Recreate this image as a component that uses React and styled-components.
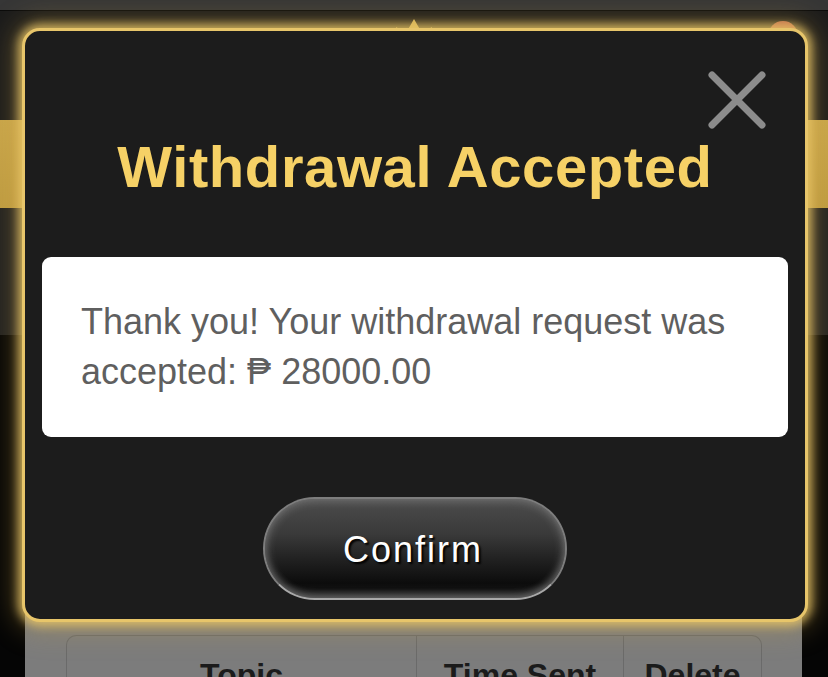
import React from "react";
import styled, { createGlobalStyle } from "styled-components";

const Global = createGlobalStyle`
  html, body { margin: 0; padding: 0; background: #050505; }
  body { font-family: "Liberation Sans", "DejaVu Sans", Arial, sans-serif; }
  * { box-sizing: border-box; }
`;

const Page = styled.div`
  position: relative;
  width: 828px;
  height: 677px;
  overflow: hidden;
  background: #050505;
  display: flex;
  flex-direction: column;
`;

const StatusBar = styled.div`
  height: 11px;
  flex: none;
  background: #363636;
  border-bottom: 1px solid #0b0b0b;
`;

const Header = styled.div`
  height: 109px;
  flex: none;
  background: #1b1b1b;
  display: flex;
  justify-content: space-between;
  align-items: flex-start;
  padding: 6px 30px 0 30px;
`;

const Spacer = styled.div`
  width: 30px;
`;

const Avatar = styled.div`
  width: 30px;
  height: 30px;
  border-radius: 50%;
  background: #c0664f;
  margin-top: 4px;
`;

const GoldBand = styled.div`
  height: 88px;
  flex: none;
  background: linear-gradient(180deg, #c9a64b 0%, #bf9c42 100%);
`;

const DarkStrip = styled.div`
  height: 127px;
  flex: none;
  background: #202020;
`;

const BlackArea = styled.div`
  height: 275px;
  flex: none;
  background: #050505;
`;

const GrayPanel = styled.div`
  flex: 1;
  margin: 0 26px 0 25px;
  background: #7c7c7c;
  padding: 25px 40px 0 41px;
`;

const Table = styled.div`
  display: grid;
  grid-template-columns: 349px 207px 1fr;
  border: 1px solid #6a6a6a;
  border-bottom: none;
  border-radius: 10px 10px 0 0;
  height: 80px;
`;

const HeadCell = styled.div`
  font-weight: 700;
  font-size: 32px;
  line-height: 38px;
  color: #1b1b1b;
  text-align: center;
  padding-top: 20px;
  border-left: ${(p) => (p.$first ? "none" : "1px solid #6a6a6a")};
`;

const Modal = styled.div`
  position: absolute;
  left: 22px;
  top: 28px;
  width: 786px;
  height: 594px;
  border: 3px solid #e7c56a;
  border-radius: 18px;
  background: #1c1c1c;
  box-shadow: 0 0 10px 4px rgba(233, 198, 104, 0.8),
    0 0 28px 8px rgba(205, 165, 70, 0.35);
  display: flex;
  flex-direction: column;
  align-items: center;
  padding: 0 17px;
`;

const CloseButton = styled.button`
  position: absolute;
  top: 39px;
  right: 38px;
  width: 60px;
  height: 60px;
  padding: 0;
  border: none;
  background: transparent;
  cursor: pointer;
  display: block;
`;

const Title = styled.h1`
  margin: 102px 0 0 0;
  height: 67px;
  font-size: 58px;
  line-height: 67px;
  font-weight: 700;
  letter-spacing: 0.6px;
  color: #f6d166;
  text-align: center;
  white-space: nowrap;
`;

const MessageBox = styled.div`
  margin-top: 57px;
  width: 100%;
  height: 180px;
  background: #ffffff;
  border-radius: 9px;
  padding: 40px 39px;
  font-size: 36px;
  line-height: 50px;
  color: #5f5f5f;
`;

const ConfirmButton = styled.button`
  margin-top: 60px;
  width: 304px;
  height: 103px;
  border-radius: 52px;
  border: 2px solid #7d7d7d;
  border-bottom-color: #a8a8a8;
  background: linear-gradient(
    180deg,
    #4c4c4c 0%,
    #3a3a3a 35%,
    #222222 60%,
    #0c0c0c 85%,
    #1a1a1a 100%
  );
  box-shadow: inset 0 0 10px 2px rgba(255, 255, 255, 0.22),
    inset 0 -4px 6px rgba(180, 180, 180, 0.25);
  color: #ffffff;
  font-family: "Liberation Sans", "DejaVu Sans", Arial, sans-serif;
  font-size: 36px;
  letter-spacing: 2px;
  text-shadow: 2px 2px 2px #000;
  display: flex;
  align-items: center;
  justify-content: center;
  padding: 3px 4px 0 0;
  cursor: pointer;
`;

const Crown = () => (
  <svg width="40" height="26" viewBox="0 0 40 26">
    <path
      d="M4 24 L2 10 L12 16 L20 2 L28 16 L38 10 L36 24 Z"
      fill="#d8b75c"
    />
  </svg>
);

const CloseIcon = () => (
  <svg width="60" height="60" viewBox="0 0 60 60">
    <path
      d="M5 5 L55 55 M55 5 L5 55"
      stroke="#8c8c8c"
      strokeWidth="7"
      strokeLinecap="round"
    />
  </svg>
);

export default function App() {
  return (
    <>
      <Global />
      <Page>
        <StatusBar />
        <Header>
          <Spacer />
          <Crown />
          <Avatar />
        </Header>
        <GoldBand />
        <DarkStrip />
        <BlackArea />
        <GrayPanel>
          <Table>
            <HeadCell $first>Topic</HeadCell>
            <HeadCell>Time Sent</HeadCell>
            <HeadCell>Delete</HeadCell>
          </Table>
        </GrayPanel>

        <Modal>
          <CloseButton aria-label="Close">
            <CloseIcon />
          </CloseButton>
          <Title>Withdrawal Accepted</Title>
          <MessageBox>
            Thank you! Your withdrawal request was accepted: ₱ 28000.00
          </MessageBox>
          <ConfirmButton>Confirm</ConfirmButton>
        </Modal>
      </Page>
    </>
  );
}
